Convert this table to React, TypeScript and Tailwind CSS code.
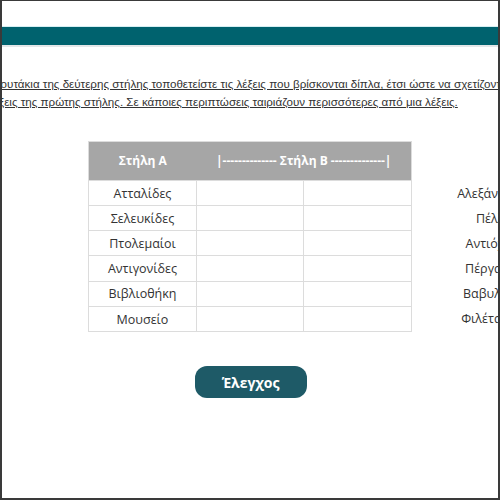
import React from "react";

const rowsA = ["Ατταλίδες", "Σελευκίδες", "Πτολεμαίοι", "Αντιγονίδες", "Βιβλιοθήκη", "Μουσείο"];
const words = ["Αλεξάνδρεια", "Πέλλα", "Αντιόχεια", "Πέργαμος", "Βαβυλώνα", "Φιλέταιρος"];

export default function App() {
  return (
    <div
      className="w-[500px] h-[500px] overflow-hidden bg-white border-l-2 border-r-2 border-b-2 border-t border-[#3a3a3a] text-[#333]"
      style={{ fontFamily: '"Open Sans", "Noto Sans", sans-serif' }}
    >
      {/* header band */}
      <div className="mt-[25px] h-px bg-[#d6eef2]" />
      <div className="h-[18px] bg-[#00626e]" />
      <div className="h-[2px] bg-[#e3e6e8]" />

      {/* instructions */}
      <div
        className="mt-[28px] text-[11.6px] leading-[18px] underline whitespace-nowrap"
        style={{ fontFamily: '"Liberation Sans", Arial, sans-serif' }}
      >
        <div className="-ml-[28px]">
          Στα κουτάκια της δεύτερης στήλης τοποθετείστε τις λέξεις που βρίσκονται δίπλα, έτσι ώστε να σχετίζονται με τις
        </div>
        <div className="-ml-[14px]">
          λέξεις της πρώτης στήλης. Σε κάποιες περιπτώσεις ταιριάζουν περισσότερες από μια λέξεις.
        </div>
      </div>

      {/* matching area */}
      <div className="mt-[30px] ml-[86px] flex gap-[28px] whitespace-nowrap">
        <table className="border-collapse text-[12.5px] border border-[#dcdcdc] shrink-0">
          <thead>
            <tr className="bg-[#a6a6a6] text-white text-[12px] font-bold">
              <th className="w-[108px] h-[39px] font-bold">Στήλη Α</th>
              <th colSpan={2} className="w-[215px] font-bold">
                |-------------- Στήλη Β --------------|
              </th>
            </tr>
          </thead>
          <tbody>
            {rowsA.map((r) => (
              <tr key={r}>
                <td className="h-[25px] pt-[2px] text-center border border-[#dcdcdc]">{r}</td>
                <td className="w-[107px] border border-[#dcdcdc]" />
                <td className="w-[108px] border border-[#dcdcdc]" />
              </tr>
            ))}
          </tbody>
        </table>

        <div className="w-[108px] shrink-0 pt-[41px] text-[12.5px]">
          {words.map((w) => (
            <div key={w} className="h-[25px] flex items-center justify-center">
              {w}
            </div>
          ))}
        </div>
      </div>

      <div className="mt-[34px] flex justify-center pl-[1px]">
        <button
          type="button"
          className="w-[112px] h-[32px] rounded-[12px] bg-[#1e5a67] text-white text-[14px] font-bold"
        >
          Έλεγχος
        </button>
      </div>
    </div>
  );
}
